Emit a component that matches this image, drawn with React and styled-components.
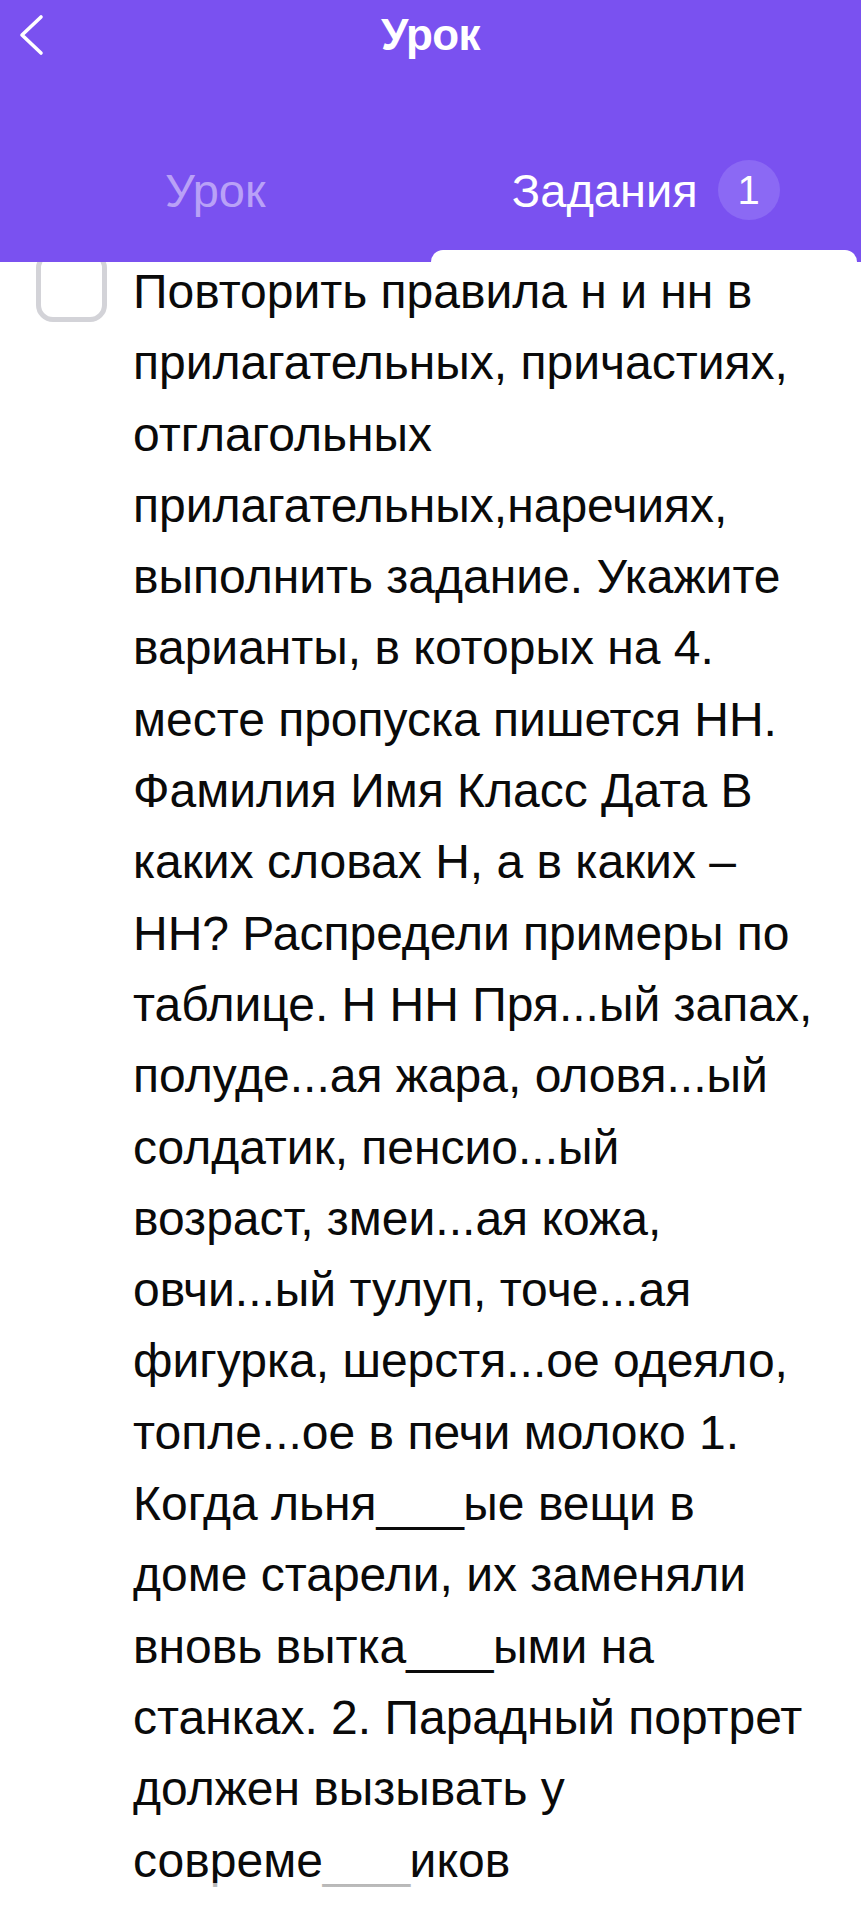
import React from "react";
import styled, { createGlobalStyle } from "styled-components";

const GlobalStyle = createGlobalStyle`
  html, body {
    margin: 0;
    padding: 0;
    background: #fff;
  }
  body {
    font-family: "Liberation Sans", Arial, sans-serif;
    -webkit-font-smoothing: antialiased;
  }
`;

const Page = styled.div`
  width: 861px;
  min-height: 1920px;
  background: #fff;
  overflow: hidden;
  position: relative;
`;

const Header = styled.header`
  background: #7a51f0;
  height: 262px;
  display: flex;
  flex-direction: column;
  position: relative;
  z-index: 2;
`;

const TopBar = styled.div`
  height: 70px;
  display: flex;
  align-items: center;
  justify-content: center;
  position: relative;
`;

const BackButton = styled.button`
  position: absolute;
  left: 12px;
  top: 10px;
  width: 40px;
  height: 50px;
  border: 0;
  padding: 0;
  background: transparent;
  cursor: pointer;
`;

const Title = styled.h1`
  margin: 0;
  color: #fff;
  font-size: 44px;
  font-weight: 700;
  letter-spacing: -0.6px;
`;

const Tabs = styled.div`
  flex: 1;
  display: grid;
  grid-template-columns: 1fr 1fr;
`;

const Tab = styled.div`
  display: flex;
  flex-direction: column;
  justify-content: flex-end;
`;

const TabLabel = styled.div`
  flex: 1;
  display: flex;
  align-items: center;
  justify-content: center;
  gap: 20px;
  padding-top: 60px;
  font-size: 47px;
  color: ${(p) => (p.$active ? "#fff" : "#b9a1f7")};
`;

const Badge = styled.span`
  width: 62px;
  height: 60px;
  border-radius: 50%;
  background: #8b69f4;
  color: #fff;
  font-size: 40px;
  display: flex;
  align-items: center;
  justify-content: center;
`;

const Indicator = styled.div`
  height: 12px;
  margin-right: 4px;
  border-radius: 14px 14px 0 0;
  background: ${(p) => (p.$active ? "#fff" : "transparent")};
`;

const Content = styled.main`
  margin-top: -11px;
  padding: 0 10px 0 36px;
`;

const Task = styled.div`
  display: flex;
  align-items: flex-start;
  gap: 26px;
`;

const Checkbox = styled.div`
  flex: none;
  width: 61px;
  height: 61px;
  border: 5px solid #d3d3d8;
  border-radius: 17px;
  background: #fff;
`;

const TaskText = styled.p`
  margin: 0;
  padding-top: 5px;
  color: #0a0a0a;
  font-size: 48px;
  line-height: 71.3px;
`;

const Line = styled.span`
  display: block;
  white-space: nowrap;
`;

const Blank = styled.span`
  letter-spacing: -6.5px;
  margin-right: 6px;
`;

const Fade = styled.div`
  position: absolute;
  left: 0;
  right: 0;
  bottom: 0;
  height: 37px;
  background: linear-gradient(
    rgba(255, 255, 255, 0.7),
    rgba(255, 255, 255, 0.95)
  );
  z-index: 3;
`;

const lines = [
  "Повторить правила н и нн в",
  "прилагательных, причастиях,",
  "отглагольных",
  "прилагательных,наречиях,",
  "выполнить задание. Укажите",
  "варианты, в которых на 4.",
  "месте пропуска пишется НН.",
  "Фамилия Имя Класс Дата В",
  "каких словах Н, а в каких –",
  "НН? Распредели примеры по",
  "таблице. Н НН Пря...ый запах,",
  "полуде...ая жара, оловя...ый",
  "солдатик, пенсио...ый",
  "возраст, змеи...ая кожа,",
  "овчи...ый тулуп, точе...ая",
  "фигурка, шерстя...ое одеяло,",
  "топле...ое в печи молоко 1.",
  "Когда льня____ые вещи в",
  "доме старели, их заменяли",
  "вновь вытка____ыми на",
  "станках. 2. Парадный портрет",
  "должен вызывать у",
  "совреме____иков",
];

function renderLine(text) {
  // blanks "____" are narrower in the original font
  return text.split(/(_+)/).map((part, i) =>
    part.startsWith("_") ? <Blank key={i}>{part}</Blank> : part
  );
}

function BackIcon() {
  return (
    <svg width="40" height="50" viewBox="0 0 40 50" fill="none">
      <path
        d="M29 7 L10 25 L29 43"
        stroke="#fff"
        strokeWidth="3.6"
        strokeLinecap="round"
        strokeLinejoin="round"
      />
    </svg>
  );
}

export default function App() {
  return (
    <Page>
      <GlobalStyle />
      <Header>
        <TopBar>
          <BackButton aria-label="Назад">
            <BackIcon />
          </BackButton>
          <Title>Урок</Title>
        </TopBar>
        <Tabs>
          <Tab>
            <TabLabel>Урок</TabLabel>
            <Indicator />
          </Tab>
          <Tab>
            <TabLabel $active>
              Задания
              <Badge>1</Badge>
            </TabLabel>
            <Indicator $active />
          </Tab>
        </Tabs>
      </Header>
      <Content>
        <Task>
          <Checkbox />
          <TaskText>
            {lines.map((l, i) => (
              <Line key={i}>{renderLine(l)}</Line>
            ))}
          </TaskText>
        </Task>
      </Content>
      <Fade />
    </Page>
  );
}
